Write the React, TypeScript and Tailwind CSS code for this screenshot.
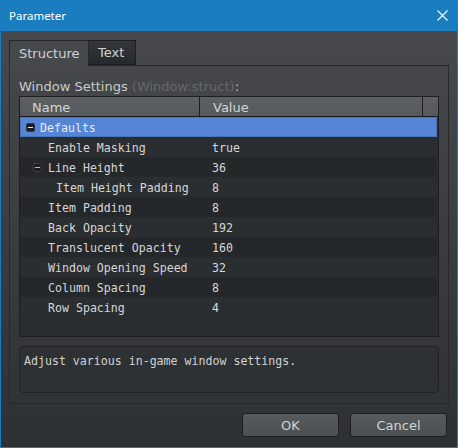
import React from 'react';

type Row = {
  name: string;
  value: string;
  pad: string;
  box?: 'root' | 'child';
  selected?: boolean;
};

const rows: Row[] = [
  { name: 'Defaults', value: '', pad: 'pl-[6px]', box: 'root', selected: true },
  { name: 'Enable Masking', value: 'true', pad: 'pl-[28px]' },
  { name: 'Line Height', value: '36', pad: 'pl-[13px]', box: 'child' },
  { name: 'Item Height Padding', value: '8', pad: 'pl-[36px]' },
  { name: 'Item Padding', value: '8', pad: 'pl-[28px]' },
  { name: 'Back Opacity', value: '192', pad: 'pl-[28px]' },
  { name: 'Translucent Opacity', value: '160', pad: 'pl-[28px]' },
  { name: 'Window Opening Speed', value: '32', pad: 'pl-[28px]' },
  { name: 'Column Spacing', value: '8', pad: 'pl-[28px]' },
  { name: 'Row Spacing', value: '4', pad: 'pl-[28px]' },
];

const sans = "font-['DejaVu_Sans',sans-serif]";
const mono = "font-['DejaVu_Sans_Mono',monospace]";

const MinusBox = ({ kind }: { kind: 'root' | 'child' }) => (
  <span
    className={`flex h-[9px] w-[9px] shrink-0 items-center justify-center rounded-[2px] ${
      kind === 'root' ? 'bg-[#1b1d1f] border border-[#2a3a55]' : 'bg-[#1c1e20] border border-[#3c3f42]'
    }`}
  >
    <span className={`h-px w-[5px] ${kind === 'root' ? 'bg-[#e8e8e8]' : 'bg-[#bdbdbd]'}`} />
  </span>
);

export default function App() {
  return (
    <div className="flex h-[448px] w-[458px] flex-col border border-[#1a7dc0] bg-[#1a7dc0]">
      {/* Title bar */}
      <div className="flex h-[30px] shrink-0 items-center justify-between pl-[8px] pr-[9px]">
        <span className="font-['Noto_Sans',sans-serif] text-[11.5px] text-white">Parameter</span>
        <svg width="11" height="11" viewBox="0 0 11 11" className="mb-[1px]">
          <path d="M0.5 0.5 L10.5 10.5 M10.5 0.5 L0.5 10.5" stroke="#ffffff" strokeWidth="1.1" />
        </svg>
      </div>

      {/* Body */}
      <div className={`flex flex-1 flex-col bg-gradient-to-b from-[#47494c] to-[#2e3134] px-[8px] pt-[9px] ${sans}`}>
        {/* Tabs */}
        <div className="relative z-10 -mb-px flex h-[26px]">
          <div className="flex w-[80px] items-center border border-b-0 border-[#26282a] bg-[#46494c] pl-[9px] pt-[1px] text-[13px] text-[#cfd0d1]">
            Structure
          </div>
          <div className="flex h-[25px] w-[47px] items-center border border-l-0 border-[#1c1e20] bg-gradient-to-b from-[#34373a] to-[#262a2d] pl-[9px] pt-[1px] text-[13px] text-[#d0d1d2]">
            Text
          </div>
        </div>

        {/* Panel */}
        <div className="flex h-[339px] flex-col border border-[#26282a] px-[9px] pt-[12px] pb-[10px]">
          <div className="h-[16px] text-[13px] leading-[18px] text-[#c9cacb]">
            Window Settings <span className="text-[#66696c]">(Window:struct)</span>:
          </div>

          {/* Table */}
          <div className="mt-[2px] flex h-[241px] flex-col border border-[#1c1e20] bg-[#2b2e31]">
            <div className="flex h-[20px] shrink-0 border-b border-[#1c1e20] bg-gradient-to-b from-[#5d6164] to-[#55595c] text-[13px] text-[#d4d5d6]">
              <div className="flex w-[180px] items-center border-r border-[#1c1e20] pl-[12px] pt-[3px]">Name</div>
              <div className="flex w-[223px] items-center border-r border-[#1c1e20] pl-[13px] pt-[3px]">Value</div>
              <div className="flex-1" />
            </div>
            <div className={`flex flex-col pr-px ${mono} text-[11.6px]`}>
              {rows.map((r, i) => (
                <div
                  key={r.name}
                  className={`flex h-[20px] items-center ${
                    r.selected
                      ? 'border border-[#4a74b8] bg-[#5785d6] text-[#e6ebf3]'
                      : i % 2 === 1
                        ? 'bg-[#2b2e31] text-[#d6d6d6]'
                        : 'bg-[#25282b] text-[#d6d6d6]'
                  }`}
                >
                  <div className={`flex w-[192px] items-center gap-[5px] ${r.pad} ${r.selected ? '-ml-px' : ''}`}>
                    {r.box && <MinusBox kind={r.box} />}
                    <span className={`pt-[3px] ${r.box === 'child' ? 'ml-px' : ''}`}>{r.name}</span>
                  </div>
                  <div className="pt-[3px]">{r.value}</div>
                </div>
              ))}
            </div>
          </div>

          {/* Description */}
          <div className={`mt-[9px] h-[47px] rounded-[4px] border border-[#202225] bg-[#2e3134] px-[4px] pt-[6px] ${mono} text-[11.6px] text-[#d2d2d2]`}>
            Adjust various in-game window settings.
          </div>
        </div>

        {/* Buttons */}
        <div className="mt-[9px] flex justify-end gap-[11px] pr-[2px]">
          <button className="h-[24px] w-[97px] rounded-[3px] border border-[#1c1e20] bg-gradient-to-b from-[#575b5e] to-[#4c5053] pt-[1px] text-[13px] text-[#d2d3d4]">
            OK
          </button>
          <button className="h-[24px] w-[97px] rounded-[3px] border border-[#1c1e20] bg-gradient-to-b from-[#575b5e] to-[#4c5053] pt-[1px] text-[13px] text-[#d2d3d4]">
            Cancel
          </button>
        </div>
      </div>
    </div>
  );
}
